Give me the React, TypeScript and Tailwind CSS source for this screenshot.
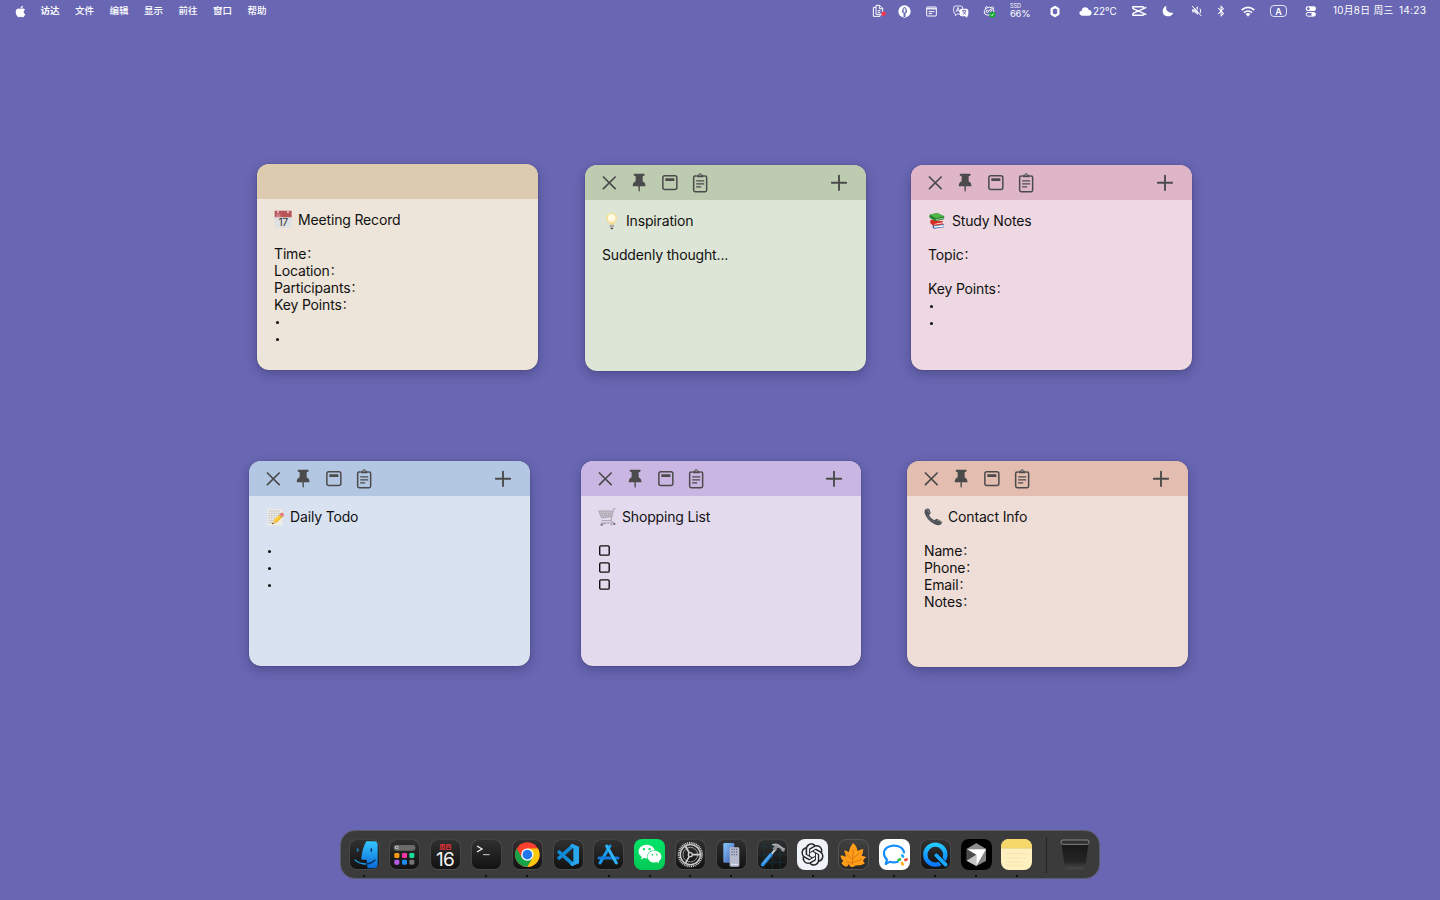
import type { ReactNode } from "react";
import { FaApple, FaBluetoothB, FaWeixin } from "react-icons/fa";
import { RiOpenaiFill } from "react-icons/ri";

/* ---------- menu bar ---------- */

const menus = ["访达", "文件", "编辑", "显示", "前往", "窗口", "帮助"];

function MenuBar() {
  return (
    <header className="flex h-[22px] w-full items-center whitespace-nowrap text-white">
      <FaApple className="ml-[14px] mr-[13.6px] h-[13px] w-[13px] shrink-0" />
      <nav className="flex text-[9.5px] font-medium">
        {menus.map((m, i) => (
          <span key={m} className={i === 0 ? "w-[34.5px] font-bold" : "w-[34.5px]"}>
            {m}
          </span>
        ))}
      </nav>
      <div className="ml-auto flex h-full items-center pr-[13px]">
        <svg className="h-[14px] w-[14px]" viewBox="0 0 42 42" fill="none" stroke="white" strokeWidth="3">
          <path d="M12 10H4v27h20v-6" />
          <path d="M12 31V4h11l9 9v18H12z" />
          <path d="M22 4v10h10M17 20h8M17 25h8" />
          <circle cx="35" cy="29" r="6.5" fill="#ff3248" stroke="none" />
        </svg>
        <svg className="ml-[12px] h-[13px] w-[13px]" viewBox="0 0 39 39">
          <circle cx="19.500" cy="19.500" r="18.500" fill="white" />
          <path d="M12 23c0-10 3-17 7.500-17S27 13 27 23z" fill="#6967b3" />
          <path d="M16.500 22h6v14h-6z" fill="#6967b3" />
          <path d="M19.500 10v12" stroke="white" strokeWidth="5" />
        </svg>
        <svg className="ml-[15px] h-[11px] w-[11px]" viewBox="0 0 33 33" fill="none" stroke="white" strokeWidth="3">
          <rect x="2" y="3" width="29" height="27" rx="2" />
          <path d="M3 8h27" strokeWidth="5" opacity=".85" />
          <path d="M8 17h17M8 23h10" strokeWidth="3" />
        </svg>
        <svg className="ml-[16px] h-[13px] w-[16px]" viewBox="0 0 48 39">
          <path d="M7 3h16q6 0 6 6v12q0 6-6 6H13l-6 5v-6q-5-1-5-6V9q0-6 5-6z" fill="none" stroke="white" strokeWidth="2.500" />
          <path d="m9 21 6-14 5 14M11 17h8" fill="none" stroke="white" strokeWidth="2.500" />
          <path d="M26 11h14q6 0 6 6v11q0 4-3 5v5l-7-4H26q-6 0-6-6V17q0-6 6-6z" fill="white" />
          <path d="M27 17h13M33 14v3M29 29q8-4 9-11M29 18q3 7 10 10" fill="none" stroke="#6967b3" strokeWidth="2.500" />
        </svg>
        <svg className="ml-[14px] h-[13px] w-[13px]" viewBox="0 0 39 39" fill="none" stroke="white" strokeWidth="3">
          <path d="M8 12C5 4 13 3 15 8q5-2 9 0c4-5 10-1 7 5" />
          <path d="M14 8C2 12-1 30 14 30h7M24 8q8 3 9 13" />
          <circle cx="13" cy="19" r="3.500" />
          <circle cx="23" cy="16" r="3" />
          <circle cx="28" cy="29" r="9" fill="#10a92d" stroke="none" />
          <path d="m24 29 3 3 5-6" />
        </svg>
        <div className="ml-[14px] flex w-[20px] flex-col">
          <span className="text-[5.5px] leading-[5px]">SSD</span>
          <span className="text-[9.5px] leading-[9px] tracking-[-0.3px]">66%</span>
        </div>
        <svg className="ml-[19px] h-[13px] w-[12px]" viewBox="0 0 36 39">
          <path d="M18 6 28 12v15l-10 6-10-6V12z" fill="none" stroke="white" strokeWidth="7" strokeLinejoin="round" />
        </svg>
        <svg className="ml-[18px] h-[9px] w-[13px]" viewBox="0 0 39 27">
          <path d="M9 26q-8-1-8-8 0-6 7-7Q10 1 19 1q8 0 11 8 8 1 8 9 0 7-7 8z" fill="white" />
        </svg>
        <span className="ml-[1px] w-[25px] text-[9.9px]">22°C</span>
        <svg className="ml-[14px] h-[12px] w-[15px]" viewBox="0 0 45 36" fill="none" stroke="white" strokeWidth="4.500">
          <path d="M3 12V5h28q5 0 5 4M3 24v7h28q5 0 5-4" />
          <path d="M3 11 43 29M3 25 43 7" />
        </svg>
        <svg className="ml-[15px] h-[12px] w-[12px]" viewBox="0 0 36 36">
          <path d="M13 2Q8 22 34 24 28 35 16 34 2 32 2 18 2 8 13 2z" fill="white" />
        </svg>
        <svg className="ml-[17px] h-[12px] w-[12px]" viewBox="0 0 36 36">
          <path d="M3 13h7L21 3v27L10 22H3z" fill="white" opacity=".8" />
          <path d="m6 1 28 30" stroke="#6967b3" strokeWidth="3" />
          <path d="m3 3 28 30M27 11q4 6 0 14" fill="none" stroke="white" strokeWidth="3" />
        </svg>
        <FaBluetoothB className="ml-[13px] h-[12px] w-[10px]" />
        <svg className="ml-[15px] h-[11px] w-[14px]" viewBox="0 0 42 33" fill="none" stroke="white" strokeWidth="5">
          <path d="M2 12Q21-4 40 12M9 20q12-10 24 0" />
          <path d="m21 32-7-8q7-6 14 0z" fill="white" stroke="none" />
        </svg>
        <span className="ml-[15px] flex h-[12px] w-[17px] items-center justify-center rounded-[4px] border border-white/80 text-[9px] font-semibold leading-none">
          A
        </span>
        <svg className="ml-[18px] h-[11px] w-[12px]" viewBox="0 0 36 33">
          <rect x="2" y="1" width="31" height="14" rx="7" fill="white" />
          <circle cx="10" cy="8" r="4" fill="#6967b3" />
          <rect x="3.500" y="19.500" width="28" height="11" rx="5.500" fill="none" stroke="white" strokeWidth="3" />
          <circle cx="25" cy="25" r="6" fill="white" />
        </svg>
        <span className="ml-[16px] w-[66px] pt-px text-[9.8px] tracking-[0.3px]">10月8日 周三</span>
        <span className="w-[28px] text-[10.2px] tracking-[0.2px]">14:23</span>
      </div>
    </header>
  );
}

/* ---------- emoji drawings ---------- */

function Emoji({ children, className = "mr-[6px]" }: { children: ReactNode; className?: string }) {
  return (
    <svg className={`h-[18px] w-[18px] shrink-0 ${className}`} viewBox="0 0 54 54">
      {children}
    </svg>
  );
}

const CalendarEmoji = (
  <Emoji className="-mt-px mr-[6px]">
    <rect x="2" y="2" width="51" height="51" rx="2" fill="#dfe0e2" />
    <path d="M2 2h51v20H2z" fill="#b9545a" />
    <path d="M12 4v4M42 4v4" stroke="#f4e4e4" strokeWidth="4" strokeLinecap="round" />
    <text x="5" y="20" fontSize="9" fill="#f5d8d8">JUL</text>
    <text x="27" y="48" fontSize="31" textAnchor="middle" fill="#333" letterSpacing="-1.5">17</text>
  </Emoji>
);
const BulbEmoji = (
  <Emoji>
    <path d="M13 19C13-2 45-2 45 19c0 9-8 11-9 19H23c-1-8-10-10-10-19z" fill="#fbdc8c" />
    <ellipse cx="29" cy="19" rx="11" ry="13" fill="#fffbe6" />
    <path d="M25 37V26l4 3 4-3v11" fill="none" stroke="#f3cd73" strokeWidth="1.500" />
    <path d="M23 38h13v8q-6 6-13 0z" fill="#b8b7b2" />
    <path d="M25 48h9l-3 4h-4z" fill="#4b4b4b" />
    <path d="M23 42h13" stroke="#8e8e89" strokeWidth="1.500" />
  </Emoji>
);
const BooksEmoji = (
  <Emoji>
    <path d="m14 40 33-4 1 10-31 4q-5-5-3-10z" fill="#3764a8" />
    <path d="m18 42 29-3v5l-28 3z" fill="#eef2f5" />
    <path d="m8 23 36 5 1 9-27 4Q3 36 8 23z" fill="#d62b22" />
    <path d="m19 36 25-5v3l-25 4z" fill="#f6eee6" />
    <path d="m5 8 22-5 22 10-1 9-27 5L6 18Q2 14 5 8z" fill="#26822d" />
    <path d="M5 8 27 3l22 10-26 6z" fill="#53b64d" />
    <path d="m24 22 24-5v2l-25 5z" fill="#e6ecdc" />
  </Emoji>
);
const MemoEmoji = (
  <Emoji className="mr-[6px]">
    <path d="M4 3h46v50H4z" fill="#ecebe6" />
    <path d="M9 9h35M8 16h36M8 23h29M8 30h20M8 37h12M8 44h10" stroke="#a5a8aa" strokeWidth="2" strokeDasharray="5 2" />
    <path d="m18 49 5-13 22-20 8 8-22 20z" fill="#f6b51b" />
    <path d="m25 40 22-20" stroke="#ffdc55" strokeWidth="4" />
    <path d="m18 49 5-13 8 8z" fill="#edc58d" />
    <path d="m18 49 2-5 3 3z" fill="#222" />
    <path d="m41 19 4-4q4-3 7 1t1 7l-4 4z" fill="#f27880" />
    <path d="m40 20 8 8" stroke="#8aa0ae" strokeWidth="3" />
  </Emoji>
);
const CartEmoji = (
  <Emoji className="mr-[6px]">
    <g fill="none" stroke="#9b989f" strokeWidth="2.500">
      <path d="M53 2h-6L39 38H11M2 9l9 21 30-4M2 9h43" />
      <path d="m9 9 7 20M16 9l6 19M23 9l4 18M30 9l3 17M37 9l1 16M5 16h37M8 22h33" strokeWidth="1.500" />
      <path d="m39 38 9 7H9" />
    </g>
    <path d="m4 10 41 0-5 16-29 4z" fill="#aaa6ad" opacity=".4" />
    <g fill="#77747b">
      <circle cx="11" cy="50" r="3.500" />
      <circle cx="49" cy="48" r="3.500" />
      <circle cx="19" cy="47" r="2" />
      <circle cx="40" cy="50" r="2" />
    </g>
  </Emoji>
);
const PhoneEmoji = (
  <Emoji className="mr-[6px]">
    <path
      d="M5 3q7-4 11 1l4 10q0 4-5 6 4 11 17 17 4-6 8-4l11 6q5 4 1 9-7 7-20 1Q8 37 2 15 1 6 5 3z"
      fill="#4d5257"
    />
    <path d="M7 5q6 0 9 10M39 36q8 2 12 7" stroke="#878c90" strokeWidth="3" fill="none" />
    <path d="M9 20q6 17 21 23" stroke="#73797e" strokeWidth="2" fill="none" />
  </Emoji>
);

/* ---------- sticky notes ---------- */

function NoteToolbar() {
  return (
    <>
      <div className="flex items-center text-[#4b4b4b]">
        <svg className="h-[20px] w-[30.3px]" viewBox="0 0 30 20" fill="none" stroke="currentColor" strokeWidth="1.700" strokeLinecap="round">
          <path d="m9.300 4 11.700 11.700M21 4 9.300 15.700" />
        </svg>
        <svg className="h-[20px] w-[30.3px]" viewBox="0 0 30 20" fill="currentColor">
          <path d="M10.200 .8Q9.500 .8 9.500 1.600T10.200 2.700L11.500 3.200v5Q8.600 9.600 8.600 12.700q0 .6.700.6h5v4.300l.7 1.500.7-1.500v-4.300h5q.7 0 .7-.6Q21.400 9.600 18.500 8.200v-5l1.300-.5q.7-.3.700-1.100T19.800.8z" />
        </svg>
        <svg className="h-[20px] w-[30.3px]" viewBox="0 0 30 20" fill="none" stroke="currentColor" strokeWidth="1.500">
          <rect x="7.700" y="2.800" width="14" height="13.800" rx="2" />
          <path d="M10.200 6.600h9" strokeWidth="2.600" />
        </svg>
        <svg className="h-[20px] w-[30.3px]" viewBox="0 0 30 20" fill="none" stroke="currentColor" strokeWidth="1.500">
          <path d="M11 2.900H10Q8.500 2.900 8.500 4.500v12.600q0 1.600 1.500 1.600h10q1.500 0 1.500-1.600V4.500Q21.500 2.900 20 2.900h-1" />
          <path d="M11.700 3.900V2.200h1.800Q13.800.5 15 .5t1.500 1.700h1.800v1.700z" fill="currentColor" strokeWidth=".6" />
          <circle cx="15" cy="1.900" r=".7" fill="#ddd" stroke="none" />
          <path d="M11 7.800h8M11 10.800h8M11 13.800h5" strokeWidth="1.200" />
        </svg>
      </div>
      <svg className="h-[18px] w-[18px] text-[#4b4b4b]" viewBox="0 0 18 18" fill="none" stroke="currentColor" strokeWidth="1.900" strokeLinecap="round">
        <path d="M9 1.600v14.400M1.800 8.800h14.400" />
      </svg>
    </>
  );
}

interface NoteProps {
  frame: string;
  head: string;
  emoji: ReactNode;
  title: string;
  lines: string[];
  toolbar?: boolean;
}

function NoteLine({ line }: { line: string }) {
  if (line === "•")
    return (
      <p className="flex h-[17px] items-center">
        <span className="ml-[2px] mt-[2px] h-[3px] w-[3px] rounded-full bg-[#111]" />
      </p>
    );
  if (line === "[]")
    return (
      <p className="flex h-[17px] items-center">
        <svg className="ml-px h-[11px] w-[11px]" viewBox="0 0 11 11">
          <rect x=".7" y=".9" width="9.500" height="9.200" rx="1.200" fill="none" stroke="#111" strokeWidth="1.400" />
        </svg>
      </p>
    );
  if (line.endsWith("："))
    return (
      <p className="flex h-[17px]">
        {line.slice(0, -1)}
        <span className="mt-[-0.5px] text-[12px]">：</span>
      </p>
    );
  return <p className="h-[17px]">{line}</p>;
}

function Note({ frame, head, emoji, title, lines, toolbar = true }: NoteProps) {
  return (
    <section
      className={`absolute overflow-hidden rounded-[12px] shadow-[0_4px_12px_rgba(20,15,60,0.3),0_0_1px_rgba(0,0,0,0.6)] ${frame}`}
    >
      <div className={`flex h-[35px] items-center justify-between pl-[9px] pr-[18px] ${head}`}>{toolbar && <NoteToolbar />}</div>
      <div className="pl-[17px] pt-[12px] text-[14px] leading-[17px] tracking-[-0.16px] text-[#111]">
        <h2 className="mb-[17px] flex h-[17px] items-center">
          {emoji}
          {title}
        </h2>
        {lines.map((l, i) => (
          <NoteLine key={i} line={l} />
        ))}
      </div>
    </section>
  );
}

const notes: NoteProps[] = [
  {
    frame: "left-[257px] top-[164px] h-[206px] w-[281px] bg-[#ede5d9]",
    head: "bg-[#dccbaf]",
    emoji: CalendarEmoji,
    title: "Meeting Record",
    lines: ["Time：", "Location：", "Participants：", "Key Points：", "•", "•"],
    toolbar: false,
  },
  {
    frame: "left-[585px] top-[165px] h-[206px] w-[281px] bg-[#dde5d6]",
    head: "bg-[#bdcbb1]",
    emoji: BulbEmoji,
    title: "Inspiration",
    lines: ["Suddenly thought..."],
  },
  {
    frame: "left-[911px] top-[165px] h-[205px] w-[281px] bg-[#eed9e2]",
    head: "bg-[#dfb6c8]",
    emoji: BooksEmoji,
    title: "Study Notes",
    lines: ["Topic：", "", "Key Points：", "•", "•"],
  },
  {
    frame: "left-[249px] top-[461px] h-[205px] w-[281px] bg-[#d9e2f1]",
    head: "bg-[#b3c6e2]",
    emoji: MemoEmoji,
    title: "Daily Todo",
    lines: ["•", "•", "•"],
  },
  {
    frame: "left-[581px] top-[461px] h-[205px] w-[280px] bg-[#e3daee]",
    head: "bg-[#cab6e3]",
    emoji: CartEmoji,
    title: "Shopping List",
    lines: ["[]", "[]", "[]"],
  },
  {
    frame: "left-[907px] top-[461px] h-[206px] w-[281px] bg-[#efddd7]",
    head: "bg-[#e2bdb0]",
    emoji: PhoneEmoji,
    title: "Contact Info",
    lines: ["Name：", "Phone：", "Email：", "Notes："],
  },
];

/* ---------- dock ---------- */

const dark = "bg-linear-to-b from-[#303030] to-[#121212] border border-[#555]/70";

interface AppProps {
  tile?: string;
  running?: boolean;
  art: ReactNode;
}

function Art({ children }: { children: ReactNode }) {
  return (
    <svg className="h-[31px] w-[31px] shrink-0" viewBox="0 0 93 93">
      {children}
    </svg>
  );
}

const apps: AppProps[] = [
  {
    running: true,
    art: (
      <Art>
        <defs>
          <linearGradient id="finder" x1="0" y1="0" x2="0" y2="1">
            <stop offset="0" stopColor="#35c6ff" />
            <stop offset="1" stopColor="#0969d8" />
          </linearGradient>
        </defs>
        <path d="M52 7h23q11 0 11 13v54q0 14-14 14H56q-3-11-3-26H40q-4 0-3-6 3-28 15-49z" fill="url(#finder)" />
        <path d="M26 30v6" stroke="#1b86c7" strokeWidth="5" strokeLinecap="round" />
        <path d="M67 30v6" stroke="#07325e" strokeWidth="5" strokeLinecap="round" />
        <path d="M18 63q14 12 33 12" fill="none" stroke="#1a9ce8" strokeWidth="4" strokeLinecap="round" />
        <path d="M53 75q14-1 25-12" fill="none" stroke="#07325e" strokeWidth="4" strokeLinecap="round" />
      </Art>
    ),
  },
  {
    art: (
      <Art>
        <rect x="14" y="18" width="65" height="17" rx="7" fill="#6a6a6a" />
        <circle cx="23" cy="25" r="4" fill="none" stroke="#ddd" strokeWidth="2.500" />
        <path d="m26 28 3 3" stroke="#ddd" strokeWidth="2.500" />
        <rect x="16" y="42" width="15" height="15" rx="4" fill="#ff9b14" />
        <rect x="39" y="42" width="15" height="15" rx="4" fill="#f835a4" />
        <rect x="61" y="42" width="15" height="15" rx="4" fill="#17dc9b" />
        <rect x="16" y="62" width="15" height="15" rx="4" fill="#b65be5" />
        <rect x="39" y="62" width="15" height="15" rx="4" fill="#1d8cf5" />
        <rect x="61" y="62" width="15" height="15" rx="4" fill="#747474" />
      </Art>
    ),
  },
  {
    art: (
      <Art>
        <text x="46" y="29" textAnchor="middle" fontSize="18" fontWeight="700" fill="#e9303a">周四</text>
        <text x="45" y="80" textAnchor="middle" fontSize="57" letterSpacing="-2" fill="#f4f4f4">16</text>
      </Art>
    ),
  },
  {
    running: true,
    art: (
      <Art>
        <path d="m18 21 15 9-15 9" fill="none" stroke="#eee" strokeWidth="4" />
        <path d="M36 47h20" stroke="#ccc" strokeWidth="3" />
      </Art>
    ),
  },
  {
    running: true,
    art: (
      <Art>
        <circle cx="46" cy="47" r="37" fill="#fc3f2e" />
        <path d="M46 47 30 56 14 28.500a37 37 0 0 0 32 55.500L62 56z" fill="#17a449" />
        <path d="M46 28.500h32A37 37 0 0 1 46 84l16-28z" fill="#fdc90d" />
        <circle cx="46" cy="47" r="18.500" fill="white" />
        <circle cx="46" cy="47" r="14.500" fill="#2277ee" />
      </Art>
    ),
  },
  {
    art: (
      <Art>
        <path d="m60 20-45 40M60 76 15 36" stroke="#118ad5" strokeWidth="11" />
        <path d="M57 14 78 23v50l-21 9-6-6 10-8V28l-10-8z" fill="#28a7ee" />
      </Art>
    ),
  },
  {
    running: true,
    art: (
      <Art>
        <g strokeWidth="9" strokeLinecap="round">
          <path d="m51 21-30 51" stroke="#159cf2" />
          <path d="M18 57h57" stroke="#127bdc" />
          <path d="m41 21 29 51" stroke="#31b3fa" />
        </g>
      </Art>
    ),
  },
  {
    running: true,
    tile: "bg-linear-to-b from-[#04e568] to-[#03c956]",
    art: <FaWeixin className="h-[24px] w-[24px] text-white" />,
  },
  {
    running: true,
    art: (
      <Art>
        <g fill="none" stroke="#cecece">
          <circle cx="46" cy="47" r="35" strokeWidth="6" strokeDasharray="3 2.500" />
          <circle cx="46" cy="47" r="30" strokeWidth="4" />
          <circle cx="46" cy="47" r="22" strokeWidth="3" stroke="#999" />
          <circle cx="46" cy="47" r="6" strokeWidth="4" />
          <path d="M52 47h24M43 42 31 21M43 52 31 73" strokeWidth="5" />
        </g>
      </Art>
    ),
  },
  {
    running: true,
    art: (
      <Art>
        <defs>
          <linearGradient id="phone" x1="0" y1="0" x2="1" y2="1">
            <stop offset="0" stopColor="#8acbff" />
            <stop offset="1" stopColor="#3b58ad" />
          </linearGradient>
        </defs>
        <rect x="22" y="12" width="33" height="59" rx="4" fill="url(#phone)" />
        <rect x="41" y="25" width="29" height="58" rx="4" fill="#b7bacd" />
        <path d="M46 31h20M46 39h20M46 47h20" stroke="#68708d" strokeWidth="4" strokeDasharray="4 3" />
        <path d="M46 76h19" stroke="#e8ebfa" strokeWidth="3" />
      </Art>
    ),
  },
  {
    running: true,
    art: (
      <Art>
        <path d="M22 2v89M46 2v89M69 2v89M2 22h89M2 47h89M2 70h89" stroke="#134653" strokeWidth="2" opacity=".7" />
        <path d="M17 77 57 29" stroke="#c7d5e0" strokeWidth="6" />
        <path d="M17 77 41 48" stroke="#2f8ee3" strokeWidth="11" strokeLinecap="round" />
        <path d="m18 74 22-27" stroke="#73bdf5" strokeWidth="3" />
        <path d="M43 17q18-9 29 4l8 6 5 1-4 11-8-4-2-6-9-3-8 9-7-6 5-7q-3-4-9-5z" fill="#8f9396" />
        <path d="M45 17q15-5 25 6l11 8" fill="none" stroke="#d0d0d0" strokeWidth="2" />
      </Art>
    ),
  },
  {
    running: true,
    tile: "bg-[#f0f2fa]",
    art: <RiOpenaiFill className="h-[27px] w-[27px] text-[#252525]" />,
  },
  {
    running: true,
    tile: "bg-linear-to-b from-[#414141] to-[#292929] border border-[#555]",
    art: (
      <Art>
        <path
          d="M45 12q11 8 14 24 7-5 17-6-1 12-5 21 8 0 14 4-8 4-10 11 4 4 5 8-12 6-26 5-6 6-14 5-6-2-7-9-3 6-8 8-9-1-15-10l6-8q-7-6-9-15 8-1 16 4 0-10-5-20 9 1 14 6 4-18 13-28z"
          fill="#ff9d19"
        />
        <path d="M46 30 43 76M42 60 26 46M43 60l24-20M43 71l28-10M41 72l-17-5" fill="none" stroke="#c76a10" strokeWidth="2" />
      </Art>
    ),
  },
  {
    running: true,
    tile: "bg-white",
    art: (
      <Art>
        <path
          d="M75 40C71 12 15 13 15 43q0 12 9 19l-4 13 13-7q12 4 23 0"
          fill="none"
          stroke="#1590fa"
          strokeWidth="6.500"
          strokeLinecap="round"
          strokeLinejoin="round"
        />
        <g strokeWidth="8" strokeLinecap="round">
          <path d="m70 49 2 4" stroke="#16aaf1" />
          <path d="m83 61-4 2" stroke="#f54b33" />
          <path d="m71 76-2-4" stroke="#ffad13" />
          <path d="m59 63 4-2" stroke="#25bd4c" />
        </g>
      </Art>
    ),
  },
  {
    running: true,
    art: (
      <Art>
        <defs>
          <linearGradient id="quick" x1="0" y1="0" x2="0" y2="1">
            <stop offset="0" stopColor="#23c9ff" />
            <stop offset="1" stopColor="#0878ff" />
          </linearGradient>
        </defs>
        <circle cx="46" cy="47" r="30" fill="none" stroke="url(#quick)" strokeWidth="13" />
        <path d="m49 49 28 30" stroke="#161616" strokeWidth="17" />
        <path d="m49 49 28 28" stroke="#18a9ff" strokeWidth="11" strokeLinecap="round" />
      </Art>
    ),
  },
  {
    running: true,
    tile: "bg-black",
    art: (
      <Art>
        <path d="m46 13 29 17v35L46 81 17 65V30z" fill="#747474" />
        <path d="m46 13 29 17H17z" fill="#8c8c8c" />
        <path d="M17 30 46 47 17 65z" fill="#4c4c4c" />
        <path d="m17 65 29-18v34z" fill="#c4c4c4" />
        <path d="M75 30v35L46 81z" fill="#848484" />
        <path d="M19 31h56L46 81V47z" fill="#fff" />
      </Art>
    ),
  },
  {
    running: true,
    tile: "bg-[#fff0bf]",
    art: (
      <Art>
        <path d="M0 0h93v27H0z" fill="#f5d869" />
        <path d="M0 28h93" stroke="#e3cb7c" strokeWidth="2" />
        <path d="M17 44h58M17 57h58M17 68h46M17 79h52" stroke="#eedca6" strokeWidth="2" />
      </Art>
    ),
  },
];

function Dock() {
  return (
    <footer className="mx-auto mb-[21px] mt-auto flex h-[49px] w-[760px] items-start rounded-[15px] border border-[#5c5b68] bg-[#3b3b3c] pl-[7.6px] pt-[7.5px]">
      <div className="flex gap-[9.8px]">
        {apps.map((app, i) => (
          <div key={i} className="flex w-[31px] flex-col items-center">
            <div className={`flex h-[31px] w-[31px] items-center justify-center overflow-hidden rounded-[8px] ${app.tile ?? dark}`}>
              {app.art}
            </div>
            {app.running && <span className="mt-[5.500px] h-[2px] w-[2px] rounded-full bg-black" />}
          </div>
        ))}
      </div>
      <span className="ml-[13.2px] mt-[-2px] h-[36px] w-px bg-[#222]" />
      <svg className="ml-[13.5px] h-[31px] w-[30px]" viewBox="0 0 90 93">
        <defs>
          <linearGradient id="trash" x1="0" y1="0" x2="0" y2="1">
            <stop offset="0" stopColor="#171717" />
            <stop offset=".7" stopColor="#242424" />
            <stop offset="1" stopColor="#4a4a4a" />
          </linearGradient>
        </defs>
        <path d="M4 9 14 84q2 7 10 7h42q8 0 10-7L86 9z" fill="url(#trash)" />
        <rect x="3" y="3" width="84" height="13" rx="6" fill="#303030" stroke="#999" strokeWidth="2.500" />
      </svg>
    </footer>
  );
}

export default function App() {
  return (
    <main className="relative flex h-[900px] w-[1440px] flex-col overflow-hidden bg-[#6967b3] font-[Inter,'Noto_Sans_CJK_SC',sans-serif]">
      <MenuBar />
      {notes.map((n) => (
        <Note key={n.title} {...n} />
      ))}
      <Dock />
    </main>
  );
}
